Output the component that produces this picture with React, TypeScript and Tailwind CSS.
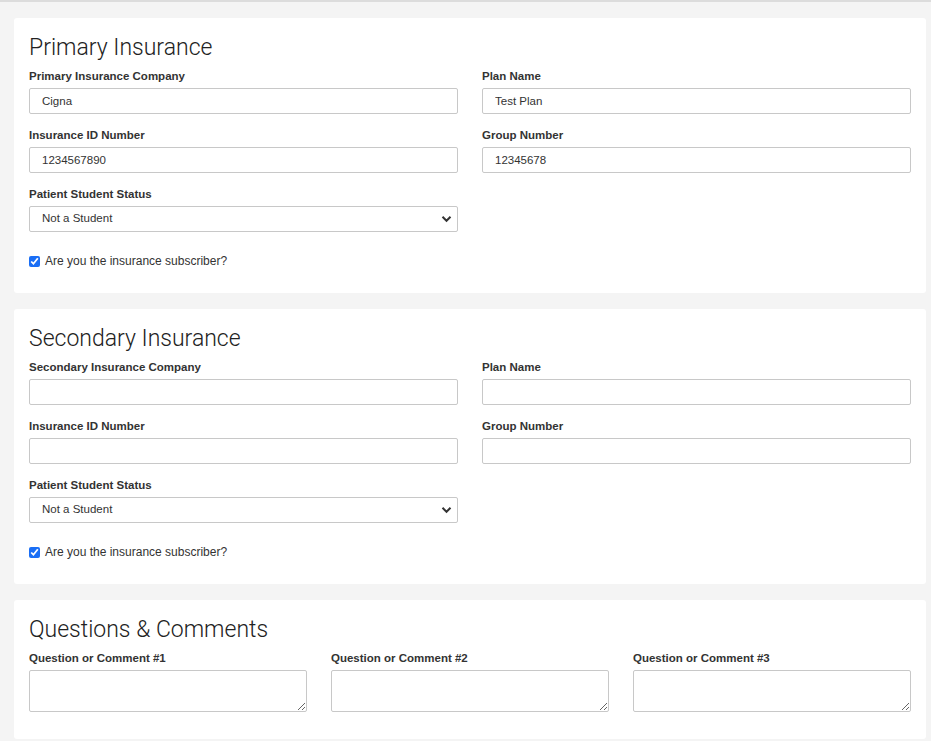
import React from "react"

const labelCls = "block text-[11.5px] font-bold leading-4 text-[#333] mb-1"
const inputCls =
  "block w-full h-[26px] rounded-[2px] border border-[#c8c8c8] bg-white px-3 text-[11.5px] text-[#333] outline-none"

function Field({ label, value }: { label: string; value?: string }) {
  return (
    <div>
      <label className={labelCls}>{label}</label>
      <input className={inputCls} defaultValue={value ?? ""} />
    </div>
  )
}

function StudentSelect() {
  return (
    <div>
      <label className={labelCls}>Patient Student Status</label>
      <div className="relative">
        <select
          className={inputCls + " appearance-none pr-8"}
          defaultValue="Not a Student"
        >
          <option>Not a Student</option>
          <option>Full-time Student</option>
          <option>Part-time Student</option>
        </select>
        <svg
          className="pointer-events-none absolute right-[6px] top-[9px]"
          width="11"
          height="8"
          viewBox="0 0 11 8"
        >
          <path d="M1.5 1.8 L5.5 5.8 L9.5 1.8" fill="none" stroke="#333" strokeWidth="2" />
        </svg>
      </div>
    </div>
  )
}

function Subscriber() {
  return (
    <label className="mt-[21px] flex items-center gap-[5px] text-[12px] leading-4 text-[#333]">
      <input type="checkbox" defaultChecked className="m-0 h-[11px] w-[11px] accent-[#1a6ef5]" />
      Are you the insurance subscriber?
    </label>
  )
}

function InsuranceCard({
  title,
  companyLabel,
  company,
  plan,
  id,
  group,
}: {
  title: string
  companyLabel: string
  company?: string
  plan?: string
  id?: string
  group?: string
}) {
  return (
    <section className="rounded-[3px] bg-white px-[15px] pt-[15px] pb-[24px]">
      <h2 className="mb-[5px] font-['Roboto',sans-serif] text-[23px] font-light leading-[30px] text-[#222]">
        {title}
      </h2>
      <div className="grid grid-cols-2 gap-x-6 gap-y-[13px]">
        <Field label={companyLabel} value={company} />
        <Field label="Plan Name" value={plan} />
        <Field label="Insurance ID Number" value={id} />
        <Field label="Group Number" value={group} />
        <StudentSelect />
      </div>
      <Subscriber />
    </section>
  )
}

export default function App() {
  return (
    <div className="min-h-[741px] border-t-2 border-[#dcdcdc] bg-[#f4f4f4] pl-[14px] pr-[5px] pt-[16px] pb-4 font-['Liberation_Sans',Arial,sans-serif]">
      <div className="flex flex-col gap-4">
        <InsuranceCard
          title="Primary Insurance"
          companyLabel="Primary Insurance Company"
          company="Cigna"
          plan="Test Plan"
          id="1234567890"
          group="12345678"
        />
        <InsuranceCard title="Secondary Insurance" companyLabel="Secondary Insurance Company" />
        <section className="rounded-[3px] bg-white px-[15px] pt-[15px] pb-[27px]">
          <h2 className="mb-[5px] font-['Roboto',sans-serif] text-[23px] font-light leading-[30px] text-[#222]">
            Questions &amp; Comments
          </h2>
          <div className="grid grid-cols-3 gap-x-6">
            {[1, 2, 3].map((n) => (
              <div key={n}>
                <label className={labelCls}>Question or Comment #{n}</label>
                <textarea className="block h-[42px] w-full rounded-[2px] border border-[#c8c8c8] bg-white px-2 py-1 text-[11.5px] outline-none" />
              </div>
            ))}
          </div>
        </section>
      </div>
    </div>
  )
}
